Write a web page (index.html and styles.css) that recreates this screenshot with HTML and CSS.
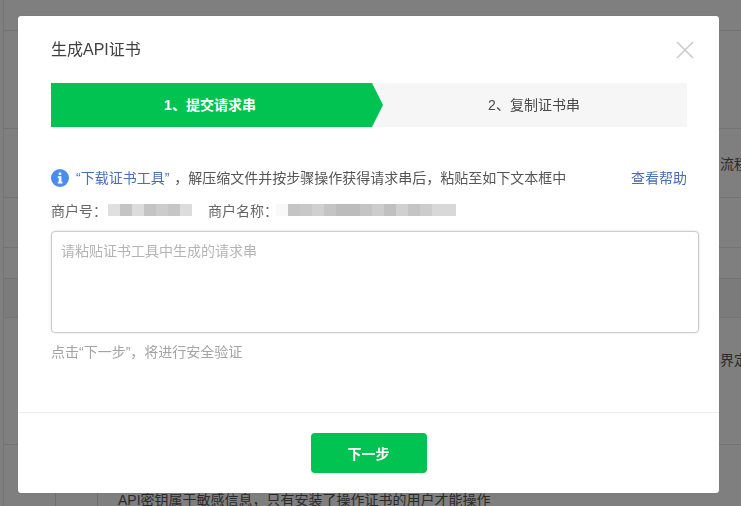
FILE: index.html
```html
<!DOCTYPE html>
<html lang="zh-CN">
<head>
<meta charset="utf-8">
<title>生成API证书</title>
<link rel="stylesheet" href="styles.css">
</head>
<body>
<div class="page">
  <div class="page-row h-30"></div>
  <div class="page-row h-98"></div>
  <div class="page-row h-69"><span class="page-text">流程</span></div>
  <div class="page-row h-50"></div>
  <div class="page-row h-31 plain"></div>
  <div class="page-row h-39 band"></div>
  <div class="page-row h-127 top"><span class="page-text">界定</span></div>
  <div class="page-row tail">
    <div class="tail-col"></div>
    <div class="tail-text">API密钥属于敏感信息，只有安装了操作证书的用户才能操作</div>
  </div>
</div>
<div class="overlay">
  <section class="modal">
    <header class="modal-head">
      <h2 class="modal-title">生成API证书</h2>
      <button class="close" type="button" aria-label="关闭">
        <svg width="18" height="18" viewBox="0 0 18 18"><path d="M1 1 17 17M17 1 1 17" fill="none" stroke="#cccccc" stroke-width="1.7"/></svg>
      </button>
    </header>
    <div class="modal-body">
      <div class="steps">
        <div class="step step-active">1、提交请求串</div>
        <div class="step step-next">2、复制证书串</div>
      </div>
      <div class="tip-row">
        <svg class="tip-icon" width="18" height="18" viewBox="0 0 18 18">
          <circle cx="9" cy="9" r="9" fill="#4a8df0"/>
          <rect x="7.7" y="3.4" width="2.6" height="2.6" rx="0.7" fill="#fff"/>
          <path d="M6.8 7.2h3.6v5.5h1v1.7H6.8v-1.7h1V8.9h-1z" fill="#fff"/>
        </svg>
        <p class="tip-text"><a class="link link-tool" href="#">“下载证书工具”</a>，解压缩文件并按步骤操作获得请求串后，粘贴至如下文本框中</p>
        <a class="link link-help" href="#">查看帮助</a>
      </div>
      <div class="merchant-row">
        <span class="label">商户号：</span>
        <span class="mosaic mosaic-id">
          <i class="s-e0"></i><i class="s-c4"></i><i class="s-dc"></i><i class="s-c4"></i><i class="s-cc"></i><i class="s-c6"></i><i class="s-dc"></i>
        </span>
        <span class="label">商户名称：</span>
        <span class="mosaic mosaic-name">
          <i class="s-f8"></i><i class="s-c4"></i><i class="s-c8"></i><i class="s-d0"></i><i class="s-c4"></i><i class="s-bc"></i><i class="s-bc"></i><i class="s-c4"></i><i class="s-cc"></i><i class="s-c0"></i><i class="s-d0"></i><i class="s-c4"></i><i class="s-cc"></i><i class="s-d8"></i><i class="s-d8"></i>
        </span>
      </div>
      <textarea class="csr-input" placeholder="请粘贴证书工具中生成的请求串"></textarea>
      <p class="hint">点击“下一步”，将进行安全验证</p>
    </div>
    <footer class="modal-foot">
      <button class="primary" type="button">下一步</button>
    </footer>
  </section>
</div>
</body>
</html>
```

FILE: styles.css
```css
* { box-sizing: border-box; }
html, body { margin: 0; height: 100%; overflow: hidden; background: #fff; }
body {
  font-family: "Liberation Sans", "Noto Sans CJK SC", sans-serif;
  font-size: 14px;
  color: #404040;
}

/* page behind the dialog */
.page { height: 506px; margin-left: 3px; border-left: 1px solid #e9e9e9; overflow: hidden; }
.page-row { border-bottom: 1px solid #e6e6e6; display: flex; align-items: center; white-space: nowrap; }
.h-30 { height: 31px; }
.h-98 { height: 98px; }
.h-69 { height: 69px; }
.h-50 { height: 50px; }
.h-31 { height: 31px; }
.h-39 { height: 39px; }
.h-127 { height: 127px; }
.band { background: #f6f6f6; }
.top { align-items: flex-start; padding-top: 31px; }
.tail { border-bottom: 0; align-items: flex-start; height: 61px; padding-left: 51px; }
.tail-col { width: 43px; height: 61px; border-left: 1px solid #dedede; border-right: 1px solid #dedede; flex: none; }
.tail-text { margin: 44px 0 0 20px; color: #555; font-size: 14px; }
.page-text { padding-left: 716px; color: #555; }

/* overlay + dialog */
.overlay {
  position: fixed;
  inset: 0;
  background: rgba(0, 0, 0, 0.5);
  padding: 16px 0 0 18px;
}
.modal {
  width: 701px;
  height: 477px;
  background: #fff;
  border-radius: 3px;
  box-shadow: 0 0 1px rgba(0, 0, 0, .3);
  display: flex;
  flex-direction: column;
}
.modal-head {
  display: flex;
  justify-content: space-between;
  align-items: center;
  height: 67px;
  padding: 0 25px 0 33px;
}
.modal-title { margin: 0; font-size: 16px; font-weight: 400; line-height: 66px; color: #404040; }
.close { display: flex; padding: 0; border: 0; background: none; margin-top: 1px; }

.modal-body { flex: 1; padding: 0 20px 0 33px; }
.steps {
  display: flex;
  width: 636px;
  height: 44px;
  background: #f6f6f6;
  line-height: 44px;
  text-align: center;
}
.step { flex: 1; }
.step-next { padding-right: 2px; color: #4a4a4a; }
.step-active {
  flex: none;
  width: 332px;
  padding-right: 14px;
  background: #00c352;
  color: #fff;
  font-weight: 700;
  clip-path: polygon(0 0, 321px 0, 100% 50%, 321px 100%, 0 100%);
}

.tip-row {
  display: flex;
  align-items: center;
  width: 636px;
  height: 22px;
  margin-top: 40px;
  color: #555;
}
.tip-icon { flex: none; margin-right: 7px; }
.tip-text { flex: 1; margin: 0 0 2px; }
.link { color: #4a6db5; text-decoration: none; }
.link-tool { margin-right: 5px; }
.link-help { margin-bottom: 2px; }

.merchant-row { display: flex; align-items: center; height: 24px; margin-top: 9px; color: #666; }
.label { margin-right: 1px; }
.mosaic { display: flex; }
.mosaic-id { margin-right: 16px; }
.mosaic-name { margin-left: -3px; }
.mosaic i { display: block; width: 12px; height: 12px; }
.s-bc { background: #bcbcbc; }
.s-c0 { background: #c0c0c0; }
.s-c4 { background: #c4c4c4; }
.s-c6 { background: #c6c6c6; }
.s-c8 { background: #c8c8c8; }
.s-cc { background: #cccccc; }
.s-d0 { background: #d0d0d0; }
.s-d8 { background: #d8d8d8; }
.s-dc { background: #dcdcdc; }
.s-e0 { background: #e0e0e0; }
.s-f8 { background: #f8f8f8; }

.csr-input {
  display: block;
  width: 648px;
  height: 102px;
  margin-top: 9px;
  padding: 9px;
  border: 1px solid #cccccc;
  border-radius: 4px;
  box-shadow: 0 0 3px rgba(0, 0, 0, .12);
  font: inherit;
  line-height: 20px;
  color: #353535;
  resize: none;
  outline: 0;
}
.csr-input::placeholder { color: #b4b4b4; opacity: 1; }
.hint { margin: 9px 0 0; line-height: 20px; color: #a3a3a3; }

.modal-foot {
  height: 81px;
  border-top: 1px solid #ececec;
  padding-top: 20px;
  display: flex;
  justify-content: center;
}
.primary {
  width: 116px;
  height: 40px;
  border: 0;
  border-radius: 4px;
  background: #00c352;
  color: #fff;
  font: inherit;
  font-weight: 700;
}
```
